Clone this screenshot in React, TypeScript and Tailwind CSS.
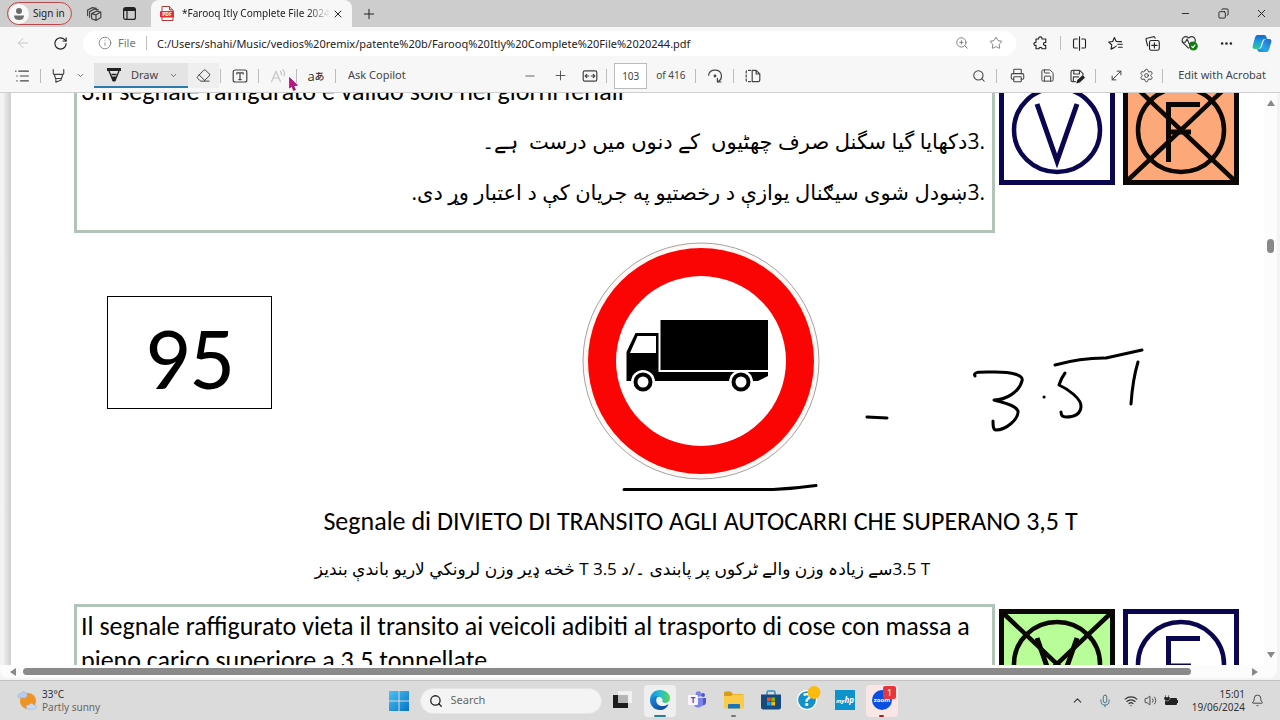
import type { ReactNode } from 'react'
import {
  ArrowLeft, RotateCw, Info, ZoomIn, Star, X, Plus, Minus, ChevronDown, ChevronUp, Eraser,
  Search, Printer, Settings, Wifi, Volume2, Bell, Mic, Ellipsis, Copy, Save, MoveDiagonal,
} from 'lucide-react'

const thin = 1.4

function IconButton({ label, className = 'w-[30px]', children }: { label: string; className?: string; children: ReactNode }) {
  return (
    <button aria-label={label} className={`flex h-full shrink-0 items-center justify-center ${className}`}>
      {children}
    </button>
  )
}

function Sep() {
  return <div className="mx-px h-3.5 w-px shrink-0 bg-[#bdbdbd]" />
}

// Small line drawing on a 20px grid
function Line({ children, size = 16, className = '' }: { children: ReactNode; size?: number; className?: string }) {
  return (
    <svg width={size} height={size} viewBox="0 0 20 20" fill="none" stroke="currentColor" strokeWidth={1.5}
      strokeLinecap="round" strokeLinejoin="round" className={className}>
      {children}
    </svg>
  )
}

function TabBar() {
  return (
    <header className="flex h-[27px] shrink-0 items-center bg-[#cdcdcd] text-[#222]">
      <button className="ml-[7px] flex h-[23px] w-[65px] items-center gap-1 rounded-full border border-[#b5474c] bg-[#d8d3d3] px-px text-[10px]">
        <svg width="20" height="20" viewBox="0 0 20 20" className="shrink-0">
          <circle cx="10" cy="10" r="10" fill="#f8f8f8" />
          <circle cx="10" cy="7" r="3" fill="#6d6d6d" />
          <path d="M5 11.500h10c0 3-2 4.500-5 4.500s-5-1.500-5-4.500z" fill="#6d6d6d" />
        </svg>
        <span className="whitespace-nowrap">Sign in</span>
      </button>
      <IconButton label="Workspaces" className="ml-1 w-9">
        <Line className="text-[#444]">
          <path d="M7 9.500l6-3 5.500 1v7l-6 3.500-5.500-2z M7 9.500l5.500 1.500 6-3.500 M12.500 11v7" />
          <path d="M4.500 14V7l6-3.200 5 1 M2 12V5l6-3 5 1" />
        </Line>
      </IconButton>
      <IconButton label="Tab actions" className="w-[35px]">
        <svg width="13" height="13" viewBox="0 0 13 13" fill="none" stroke="#222" strokeWidth="1.200">
          <rect x=".6" y=".6" width="11.800" height="11.800" rx="2" />
          <path d="M1 2.500h11" strokeWidth="3" />
          <path d="M4 4v8" />
        </svg>
      </IconButton>
      <div className="ml-1 flex h-full w-[201px] items-center rounded-t-lg bg-[#f7f7f7] pl-[9px]">
        <svg width="14" height="15" viewBox="0 0 14 15" className="shrink-0">
          <path d="M2 .5h7.500L13 4v10.500H2z" fill="#fff" stroke="#b23a36" />
          <path d="M9.500.5V4H13" fill="#e8b6b4" stroke="#b23a36" />
          <rect x="0" y="5" width="14" height="6.500" rx="1" fill="#e3302d" />
          <text x="7" y="10" fontSize="5" fontWeight="bold" textAnchor="middle" fill="#fff">PDF</text>
        </svg>
        <span className="ml-2 w-[148px] shrink-0 whitespace-nowrap mask-r-from-85% text-[10px]">*Farooq Itly Complete File 20244</span>
        <IconButton label="Close tab" className="w-4"><X size={12} strokeWidth={2} /></IconButton>
      </div>
      <IconButton label="New tab" className="w-[34px]"><Plus size={16} strokeWidth={1.5} /></IconButton>
      <div className="flex-1" />
      <IconButton label="Minimize" className="w-[38px]"><Minus size={11} strokeWidth={2} /></IconButton>
      <IconButton label="Restore" className="w-[38px]"><Copy size={11} strokeWidth={2} className="-scale-x-100" /></IconButton>
      <IconButton label="Close window" className="w-[38px]"><X size={13} strokeWidth={1.8} /></IconButton>
    </header>
  )
}

function AddressBar() {
  return (
    <div className="flex h-8 shrink-0 items-center bg-[#f7f7f7] text-[#222]">
      <IconButton label="Back" className="ml-[5px] w-9 text-[#c4c4c4]"><ArrowLeft size={16} strokeWidth={thin} /></IconButton>
      <IconButton label="Refresh" className="w-[38px]"><RotateCw size={15} strokeWidth={1.8} /></IconButton>
      <div className="ml-1 flex h-[25px] flex-1 items-center rounded-full bg-white pl-[15px] pr-[3px]">
        <Info size={14} strokeWidth={thin} className="text-[#777]" />
        <label htmlFor="url" className="ml-[6px] w-[27px] text-[11px] text-[#777]">File</label>
        <Sep />
        <input id="url" className="ml-[9px] h-full min-w-0 flex-1 text-[11px] outline-none"
          defaultValue="C:/Users/shahi/Music/vedios%20remix/patente%20b/Farooq%20Itly%20Complete%20File%2020244.pdf" />
        <IconButton label="Zoom" className="w-[34px] text-[#777]"><ZoomIn size={14} strokeWidth={1.6} /></IconButton>
        <IconButton label="Add to favourites" className="w-[34px] text-[#777]"><Star size={14} strokeWidth={1.6} /></IconButton>
      </div>
      <IconButton label="Extensions" className="ml-[6px] w-[37px]">
        <Line size={15}>
          <path d="M4 4h3.500c-.5-3.800 5-3.800 4.500 0H17v4.500c-4-.5-4 4.500 0 4V17h-5c.2-2.500-4.200-2.500-4 0H4v-4.500C.3 13 .3 8 4 8.500z" />
        </Line>
      </IconButton>
      <Sep />
      <IconButton label="Split screen" className="w-[35px]">
        <Line size={15}><path d="M10 1v18 M7 4H3.500Q2 4 2 5.500v9Q2 16 3.500 16H7 M13 4h3.500Q18 4 18 5.500v9q0 1.500-1.500 1.500H13" /></Line>
      </IconButton>
      <IconButton label="Favourites" className="w-[37px]">
        <Line size={15}><path d="M11 13.500l-3 2-4 2 1-5.500-4-3.800 5.300-.8L8.500 2l2.500 5.300 7 .2 M13 11h6 M14 15h5" /></Line>
      </IconButton>
      <IconButton label="Collections" className="w-[37px]">
        <Line size={15}>
          <rect x="6" y="6" width="13" height="13" rx="2.500" />
          <path d="M12.500 9v7 M9 12.500h7 M3.500 13L1.500 5.500q-.5-2 1.500-2.500l8-2q2-.5 2.500 2" />
        </Line>
      </IconButton>
      <IconButton label="Browser essentials" className="w-[37px]">
        <svg width="17" height="16" viewBox="0 0 22 20" fill="none" stroke="#333" strokeWidth="1.500" strokeLinejoin="round">
          <path d="M10 17L2.500 9.500C-.5 5 4.500-1 10 3.500 15.500-1 20.500 5 17.500 9.500" />
          <path d="M1 9h4.500l2.500-4 3 7 2-3h5" />
          <circle cx="16" cy="14" r="5" fill="#107c10" stroke="#107c10" />
          <path d="M13.500 14l2 2 3-4" stroke="#fff" />
        </svg>
      </IconButton>
      <IconButton label="More" className="w-9"><Ellipsis size={15} strokeWidth={2.2} /></IconButton>
      <IconButton label="Copilot" className="w-9">
        <svg width="20" height="19" viewBox="0 0 20 19">
          <defs>
            <linearGradient id="cop1" x1="0" y1="0" x2="0" y2="1"><stop stopColor="#1b5fd0" /><stop offset=".5" stopColor="#17a5dd" /><stop offset="1" stopColor="#35c98c" /></linearGradient>
            <linearGradient id="cop2" x1="1" y1="0" x2="0" y2="1"><stop stopColor="#2b5fc4" /><stop offset=".6" stopColor="#24a8e8" /><stop offset="1" stopColor="#1f82d8" /></linearGradient>
          </defs>
          <path d="M5.500 1H12q2 0 2.500 2l.5 2h-2q-2 0-2.600 2L8.500 13q-.6 2-2.500 2H3q-3 0-2.300-3L3 3.500Q3.600 1 5.500 1z" fill="url(#cop1)" />
          <path d="M14.500 5H17q3 0 2.300 3L17 15.500q-.6 2.500-2.500 2.500H8q-2 0-2.500-2L5 15h2q2 0 2.600-2l2-6q.7-2 2.900-2z" fill="url(#cop2)" />
        </svg>
      </IconButton>
    </div>
  )
}

function PdfToolbar() {
  return (
    <div className="relative flex h-[34px] shrink-0 items-center border-b border-[#cfcfcf] bg-[#f7f7f7] pl-1 text-[11px] text-[#444]">
      <IconButton label="Contents" className="w-[35px]">
        <Line><path d="M6 4h12 M8 10h10 M8 16h10 M2 4h.5 M3.500 10h.5 M3.500 16h.5" /></Line>
      </IconButton>
      <Sep />
      <IconButton label="Highlight" className="w-8">
        <Line size={15}><path d="M3 2v5q0 1 1 1.500h12q1-.5 1-1.500V2 M4.500 9l1.500 5h8l1.500-5 M6.500 14v5l7-3v-2" /></Line>
      </IconButton>
      <IconButton label="Highlight colours" className="mr-2 w-3"><ChevronDown size={9} /></IconButton>
      <button className="flex h-[25px] w-[94px] items-center border-b-2 border-[#2b7bad] bg-[#e4e4e4] pl-[13px] pt-px">
        <svg width="14" height="14" viewBox="0 0 14 14" fill="none" stroke="#222">
          <path d="M0 1.500h14" strokeWidth="3" />
          <path d="M2 3l4 9.500h2L12 3 M4.500 6.500h5" strokeWidth="1.300" />
          <path d="M5 9h4l-1.300 4H6.300z" fill="#222" />
        </svg>
        <span className="ml-[10px] flex-1 text-left">Draw</span>
        <ChevronDown size={9} className="mr-[10px]" />
      </button>
      <button aria-label="Erase" className="flex h-[25px] w-[31px] items-center justify-center bg-[#efefef]"><Eraser size={15} strokeWidth={1.6} /></button>
      <Sep />
      <IconButton label="Add text" className="w-[35px]">
        <Line><rect x="1.500" y="2.500" width="17" height="15" rx="2.500" /><path d="M6 7.500V6h8v1.500 M10 6v8.500 M8.500 14.500h3" /></Line>
      </IconButton>
      <Sep />
      <IconButton label="Read aloud" className="w-[35px] text-[#c4c4c4]">
        <Line><path d="M2 17L7.500 4 13 17 M4 12.500h7 M13 4q2 2 1 4.500 M16 2q3.500 3.500 1.500 8" /></Line>
      </IconButton>
      <Sep />
      <button aria-label="Translate" className="flex w-9 items-center justify-center font-['Open_Sans','Noto_Sans_CJK_JP',sans-serif] text-[#333]">
        <span className="text-[13px] leading-4">a</span>
        <span className="text-[10px] font-medium leading-4">あ</span>
      </button>
      <Sep />
      <button className="ml-[11px] whitespace-nowrap">Ask Copilot</button>

      <div className="flex-[4]" />
      <IconButton label="Zoom out"><Minus size={14} strokeWidth={thin} /></IconButton>
      <IconButton label="Zoom in"><Plus size={15} strokeWidth={thin} /></IconButton>
      <IconButton label="Fit to width">
        <Line><rect x="1.500" y="3.500" width="17" height="13" rx="2" /><path d="M4.500 10h4 M6 8l-2 2 2 2 M15.500 10h-4 M14 8l2 2-2 2" /></Line>
      </IconButton>
      <Sep />
      <input id="page" defaultValue="103" className="ml-[6px] h-[26px] w-[33px] border border-[#bbb] bg-white text-center text-[10px] outline-none" />
      <label htmlFor="page" className="mx-[9px] whitespace-nowrap text-[10px]">of 416</label>
      <Sep />
      <IconButton label="Rotate" className="w-[35px]">
        <Line><path d="M2 9C3 .5 17 .5 18 9c.5 4-2 7-5 8.500 M13 13v4.500h4.500" /><circle cx="10" cy="10" r="1" fill="currentColor" /></Line>
      </IconButton>
      <Sep />
      <IconButton label="Page view" className="w-[35px]">
        <Line><path d="M9 3h5l4.500 4.500V15q0 2-2 2H9z M14 3v4.500h4.500" /><path d="M7 3H3.500Q1.500 3 1.500 5v10q0 2 2 2H7" strokeDasharray="2.500 2.500" /></Line>
      </IconButton>
      <div className="flex-[7]" />

      <IconButton label="Find" className="w-[33px]"><Search size={14} strokeWidth={1.8} /></IconButton>
      <Sep />
      <IconButton label="Print" className="ml-1 w-[30px]"><Printer size={15} strokeWidth={1.7} /></IconButton>
      <IconButton label="Save"><Save size={15} strokeWidth={1.6} /></IconButton>
      <IconButton label="Save as">
        <Line>
          <path d="M8 17H4.500q-2 0-2-2V5q0-2 2-2h9l4 4v2 M6 3v4.500h7V3 M5.500 17v-6H12" />
          <path d="M10 18.500l1-3 6-5.500 2 2-6 5.500z" fill="#222" stroke="#222" />
        </Line>
      </IconButton>
      <div className="w-0.5" />
      <Sep />
      <IconButton label="Full screen" className="ml-1 w-[30px]"><MoveDiagonal size={15} strokeWidth={1.6} /></IconButton>
      <IconButton label="Settings"><Settings size={15} strokeWidth={1.6} /></IconButton>
      <Sep />
      <button className="mx-[14px] whitespace-nowrap">Edit with Acrobat</button>

      {/* mouse pointer */}
      <svg width="9" height="14" viewBox="0 0 9 14" className="absolute left-[289px] top-[18px]">
        <path d="M.5.500v10.500l2.300-1.800L4.500 13.500l2-.8-1.700-4 3.700-.4z" fill="#c4128e" stroke="#5b0f45" strokeWidth=".6" />
      </svg>
    </div>
  )
}

function Answer({ letter, crossed = false, fill = '#ffffff' }: { letter: 'V' | 'F'; crossed?: boolean; fill?: string }) {
  const ink = crossed ? '#0a0704' : '#0b0650'
  return (
    <svg width="116" height="110" viewBox="0 0 116 110" fill="none" stroke={ink} strokeWidth="5" className="shrink-0">
      <rect x="2.500" y="2.500" width="111" height="105" fill={fill} />
      <ellipse cx="58" cy="55" rx="43" ry="42" strokeWidth="4.500" />
      {letter === 'V' ? <path d="M38 29l20 57 20-57" /> : <path d="M45.500 87V29.500H77 M45.500 57H68" />}
      {crossed && <path d="M4 4l108 102 M112 4L4 106" strokeWidth="4.500" />}
    </svg>
  )
}

function TruckSign() {
  return (
    <svg width="238" height="252" viewBox="0 0 238 252" className="shrink-0">
      <circle cx="119" cy="119" r="118" fill="#fdf8f4" stroke="#a3a3a3" />
      <circle cx="119" cy="119" r="113" fill="#fb0404" />
      <circle cx="119" cy="119" r="85" fill="#fff" />
      <path d="M78.500 78H186v50H78.500z" />
      <path d="M44.500 139v-29l9-19h23v39H186v4l-10 5z" />
      <path d="M48 111l7.500-17H74v17z" fill="#fff" />
      <circle cx="61" cy="140" r="12" fill="#fff" />
      <circle cx="159" cy="140" r="12" fill="#fff" />
      <circle cx="61" cy="140" r="7.500" fill="#fff" stroke="#000" strokeWidth="4" />
      <circle cx="159" cy="140" r="7.500" fill="#fff" stroke="#000" strokeWidth="4" />
      <path d="M42 247.500h149q22-1 43-4" fill="none" stroke="#000" strokeWidth="3" strokeLinecap="round" />
    </svg>
  )
}

function HandNote() {
  return (
    <svg width="280" height="90" viewBox="0 0 280 90" fill="none" stroke="#000" strokeWidth="3" strokeLinecap="round" strokeLinejoin="round" className="shrink-0">
      <path d="M3 72l20 1" />
      <path d="M111 31c-3-5 10-4 20-4 17 0 29 3 27 9-3 11-16 19-28 19 10 3 22 5 24 11 1 8-12 19-22 19-3 0-3-5-3-9" />
      <path d="M180 52h.1" />
      <path d="M191 20c18-5 34-7 49-7 M242 13l36-8" />
      <path d="M201 28c-3 4-5 9-6 12 9 4 23 14 22 22-1 9-9 10-15 10-4 0-5-2-5-5" />
      <path d="M274 17c-4 13-6 28-7 42" />
    </svg>
  )
}

function Document() {
  return (
    <main className="-mt-6 min-w-0 flex-1 bg-white pl-[63px] pr-[25px] font-['Carlito','Lato','DejaVu_Sans',sans-serif] text-[26px] text-black">
      <section className="flex gap-1">
        <div className="h-[164px] flex-1 border-[3px] border-t-0 border-[#b0c4b7] px-1">
          <p className="pt-[5px] leading-[34px]">3.Il segnale raffigurato è valido solo nei giorni feriali</p>
          <p dir="rtl" lang="ur" className="whitespace-pre pr-[3px] pt-2 font-['Open_Sans','DejaVu_Sans',sans-serif] text-[21px] leading-[51px]">.3دکھایا گیا سگنل صرف چھٹیوں  کے دنوں میں درست  ہے۔</p>
          <p dir="rtl" lang="ps" className="whitespace-pre pr-[3px] font-['Open_Sans','DejaVu_Sans',sans-serif] text-[21px] leading-[51px]">.3ښودل شوی سیګنال یوازې د رخصتیو په جریان کې د اعتبار وړ دی.</p>
        </div>
        <div className="flex gap-2 pt-[6px]"><Answer letter="V" /><Answer letter="F" crossed fill="#fda878" /></div>
      </section>

      <section className="flex items-start pt-[9px]">
        <div className="ml-[33px] mt-[54px] flex h-[113px] w-[165px] items-center justify-center border border-black pt-[10px] text-[90px] leading-none">95</div>
        <div className="ml-[310px]"><TruckSign /></div>
        <div className="ml-11 mt-[103px]"><HandNote /></div>
      </section>

      <h2 className="pl-[88px] pt-[10px] text-center leading-[34px]">Segnale di DIVIETO DI TRANSITO AGLI AUTOCARRI CHE SUPERANO 3,5 T</h2>
      <p dir="rtl" className="pr-[68px] pt-[14px] text-center font-['Open_Sans','DejaVu_Sans',sans-serif] text-[17px] leading-[34px]">
        <bdi dir="ltr">3.5 T</bdi>سے زیادہ وزن والے ٹرکوں پر پابندی ۔/د 3.5 T څخه ډیر وزن لرونکي لاریو باندې بندیز
      </p>

      <section className="flex gap-1 pt-[18px]">
        <div className="h-[164px] flex-1 border-[3px] border-[#b0c4b7] px-1 pt-[2px]">
          <p className="leading-[34px]">Il segnale raffigurato vieta il transito ai veicoli adibiti al trasporto di cose con massa a pieno carico superiore a 3,5 tonnellate</p>
        </div>
        <div className="flex gap-2 pt-[5px]"><Answer letter="V" crossed fill="#b9fd98" /><Answer letter="F" /></div>
      </section>
    </main>
  )
}

function TaskItem({ label, active = '', mark = '', children }: { label: string; active?: string; mark?: string; children: ReactNode }) {
  return (
    <button aria-label={label} className={`flex h-8 w-8 flex-col items-center justify-between rounded pt-[5px] ${active}`}>
      {children}
      <span className={`h-[2px] rounded-full ${mark}`} />
    </button>
  )
}

function Taskbar() {
  return (
    <footer className="flex h-[40px] shrink-0 items-center border-t border-[#c2c2c2] bg-[#dbdbdb] text-[#333]">
      <div className="flex flex-1 items-center gap-1 pl-4 text-[10px] leading-[13px]">
        <svg width="22" height="22" viewBox="0 0 22 22">
          <circle cx="12" cy="11" r="8" fill="#ef9322" />
          <path d="M3 8q-2-1-1-3t3-1.500Q7 0 9.500 3 12 3.500 11 6.500 10 8 8 8z" fill="#b9cdeb" stroke="#8fabd6" strokeWidth=".5" />
          <path d="M12 19q-3-1-1.500-3.500 1.500-1 2.500-.5 2-3.500 5 0 3.500.5 2.500 3-1 1-3 1z" fill="#cbdaf1" stroke="#8fabd6" strokeWidth=".5" />
        </svg>
        <div>
          <p>33°C</p>
          <p className="text-[#666]">Partly sunny</p>
        </div>
      </div>

      <div className="flex items-center gap-[5px] pl-[6px]">
        <button aria-label="Start" className="mr-[6px]">
          <svg width="20" height="20" viewBox="0 0 20 20">
            <defs><linearGradient id="win" x2="1" y2="1"><stop stopColor="#4cc2f1" /><stop offset="1" stopColor="#0673c9" /></linearGradient></defs>
            <path d="M0 0h9.500v9.500H0z M10.500 0H20v9.500h-9.500z M0 10.500h9.500V20H0z M10.500 10.500H20V20h-9.500z" fill="url(#win)" />
          </svg>
        </button>
        <label className="flex h-[26px] w-[182px] items-center gap-2 rounded-full border border-[#e6e6e6] bg-[#f4f4f4] pl-2">
          <Search size={14} strokeWidth={2.2} className="shrink-0 text-[#222]" />
          <input placeholder="Search" className="w-full bg-transparent text-[11px] outline-none placeholder:text-[#666]" />
        </label>
        <TaskItem label="Task view">
          <svg width="20" height="20" viewBox="0 0 20 20"><path d="M0 5h15v13H0z" fill="#1c1c1c" /><path d="M5 1h14v12H5z" fill="#f0f0f0" /><path d="M5 5h10v8H5z" fill="#b5b5b5" /></svg>
        </TaskItem>
        <TaskItem label="Edge" active="bg-[#efefef]" mark="w-3 bg-[#2d7f93]">
          <svg width="20" height="20" viewBox="0 0 20 20">
            <defs>
              <linearGradient id="edgeA" x2="1" y2="0"><stop stopColor="#168ddc" /><stop offset=".5" stopColor="#25bcd0" /><stop offset="1" stopColor="#5dd64e" /></linearGradient>
              <linearGradient id="edgeB" y2="1" x2="1"><stop stopColor="#1b8ee0" /><stop offset="1" stopColor="#0c3f8c" /></linearGradient>
            </defs>
            <path d="M0 10C0 4 4.500 0 10 0c6 0 10 4 10 8 0 3-2 5-5 5-2.500 0-3.500-1-3-2 1-2-.500-4-3-4-4 0-7 2-9 3z" fill="url(#edgeA)" />
            <path d="M0 10c1.500-3 5-4.500 8-3.500-3 2-2.500 9 3.500 9.500 3 .2 5-.7 7-2-1.500 4-5 6-8.500 6C4.500 20 0 16 0 10z" fill="url(#edgeB)" />
            <path d="M8.500 8c2-.5 4 .5 4 2.500-.8 1.500.5 2.500 2.500 2.500 1.500 0 3-.3 4-1-.2 1-.5 1.700-1 2-3 2-9 2.500-10-2-.3-2 0-3.500.5-4z" fill="#eef4f6" />
          </svg>
        </TaskItem>
        <TaskItem label="Teams">
          <svg width="20" height="20" viewBox="0 0 20 20">
            <circle cx="16" cy="5" r="2" fill="#5059c9" /><circle cx="11.500" cy="4" r="2.800" fill="#7b83eb" />
            <path d="M14 8h5v5q-1 3-5 2.500z" fill="#5059c9" /><path d="M7 8h9v6q-1.500 3.500-5 3.500T7 14z" fill="#7b83eb" />
            <rect x="1" y="5" width="10" height="10" rx="1" fill="#f6f6fc" />
            <text x="6" y="13" fontSize="8" fontWeight="bold" textAnchor="middle" fill="#4b53bc">T</text>
          </svg>
        </TaskItem>
        <TaskItem label="File Explorer" mark="w-[5px] bg-[#777]">
          <svg width="20" height="20" viewBox="0 0 20 20"><path d="M0 3q0-1.500 1.500-1.500h5L9 4h9q2 0 2 1.500V10H0z" fill="#d99a1c" /><path d="M0 6h7l2-1.500h11V17q0 1.500-1.500 1.500h-17Q0 18.500 0 17z" fill="#fccb45" /><path d="M4 15q0-1 1-1h10q1 0 1 1v3.500H4z" fill="#1876b8" /></svg>
        </TaskItem>
        <TaskItem label="Store">
          <svg width="20" height="20" viewBox="0 0 20 20"><path d="M6 5V2.500Q6 1 7.500 1h5Q14 1 14 2.500V5" fill="none" stroke="#2b90c9" strokeWidth="1.500" /><path d="M0 4.500h20V17q0 2.500-2.500 2.500h-15Q0 19.500 0 17z" fill="#164a7d" /><path d="M6 7.500h3.700v3.700H6z" fill="#f25022" /><path d="M10.300 7.500H14v3.700h-3.700z" fill="#7fba00" /><path d="M6 11.800h3.700v3.700H6z" fill="#00a4ef" /><path d="M10.300 11.800H14v3.700h-3.700z" fill="#ffb900" /></svg>
        </TaskItem>
        <TaskItem label="Help">
          <svg width="26" height="24" viewBox="0 0 26 24" className="-mt-1"><circle cx="12" cy="14" r="9.500" fill="#1292c8" stroke="#fff" strokeWidth="1.300" /><text x="12" y="20" fontSize="17" fontWeight="bold" textAnchor="middle" fill="#fff">?</text><circle cx="19" cy="6.500" r="6.500" fill="#fdbb12" /></svg>
        </TaskItem>
        <TaskItem label="myHP">
          <svg width="20" height="20" viewBox="0 0 20 20"><path d="M0 0h20v20H0z" fill="#0d93cb" /><text x="10" y="13" fontSize="8" fontStyle="italic" fontWeight="bold" textAnchor="middle" fill="#fff"><tspan fontSize="6">my</tspan>hp</text></svg>
        </TaskItem>
        <TaskItem label="Zoom" active="bg-[#fbe6e6]" mark="w-[5px] bg-[#a52424]">
          <svg width="28" height="24" viewBox="0 0 28 24" className="-mt-1"><circle cx="14" cy="14" r="10" fill="#0b4fe0" /><text x="14" y="16" fontSize="6" fontWeight="bold" textAnchor="middle" fill="#fff">zoom</text><rect x="15" y="0" width="13" height="13" rx="2" fill="#e5373d" /><text x="21.500" y="10" fontSize="9" textAnchor="middle" fill="#fff">1</text></svg>
        </TaskItem>
      </div>

      <div className="flex flex-1 items-center justify-end pr-[16px]">
        <ChevronUp size={13} strokeWidth={2} className="mr-[14px]" />
        <Mic size={14} strokeWidth={1.6} className="mr-3 text-[#3f7183]" />
        <Wifi size={14} className="mr-[6px]" />
        <Volume2 size={13} strokeWidth={1.6} className="mr-[7px]" />
        <svg width="15" height="12" viewBox="0 0 15 12" fill="#222"><path d="M2 3h10q1 0 1 1v1h1v3h-1v1q0 1-1 1H2q-1 0-1-1V5z" /><path d="M1 0v2H0v2q1 2 3 2t3-2V2H5V0H4v2H2V0z" stroke="#dbdbdb" strokeWidth=".5" /></svg>
        <div className="ml-[13px] text-right text-[10px] leading-[13px]">
          <p>15:01</p>
          <p>19/06/2024</p>
        </div>
        <Bell size={13} strokeWidth={1.6} className="ml-[6px]" />
      </div>
    </footer>
  )
}

export default function App() {
  return (
    <div className="flex h-screen flex-col overflow-hidden bg-[#f3f3f3] font-['Noto_Sans',sans-serif]">
      <TabBar />
      <AddressBar />
      <PdfToolbar />
      <div className="flex min-h-0 flex-1 overflow-hidden bg-white">
        <div className="w-1 shrink-0 bg-[#f3f3f3]" />
        <div className="w-[7px] shrink-0 bg-linear-to-r from-[#ececec] to-[#cfcfcf]" />
        <Document />
        <div className="flex w-[13px] shrink-0 flex-col items-center bg-[#fcfcfc] py-[7px]">
          <div className="border-x-4 border-b-[6px] border-x-transparent border-b-[#888]" />
          <div className="mt-[133px] h-[14px] w-[7px] rounded-full bg-[#888]" />
          <div className="mt-auto border-x-4 border-t-[6px] border-x-transparent border-t-[#888]" />
        </div>
        <div className="w-[3px] shrink-0 bg-[#f3f3f3]" />
      </div>
      <div className="mr-[3px] flex h-[13px] shrink-0 items-center rounded-b-lg bg-[#fcfcfc] pl-[10px] pr-[19px]">
        <div className="border-y-4 border-r-[6px] border-y-transparent border-r-[#888]" />
        <div className="ml-[7px] mr-[61px] h-[7px] flex-1 rounded-full bg-[#8a8a8a]" />
        <div className="border-y-4 border-l-[6px] border-y-transparent border-l-[#888]" />
      </div>
      <div className="h-[2px] shrink-0" />
      <Taskbar />
    </div>
  )
}
